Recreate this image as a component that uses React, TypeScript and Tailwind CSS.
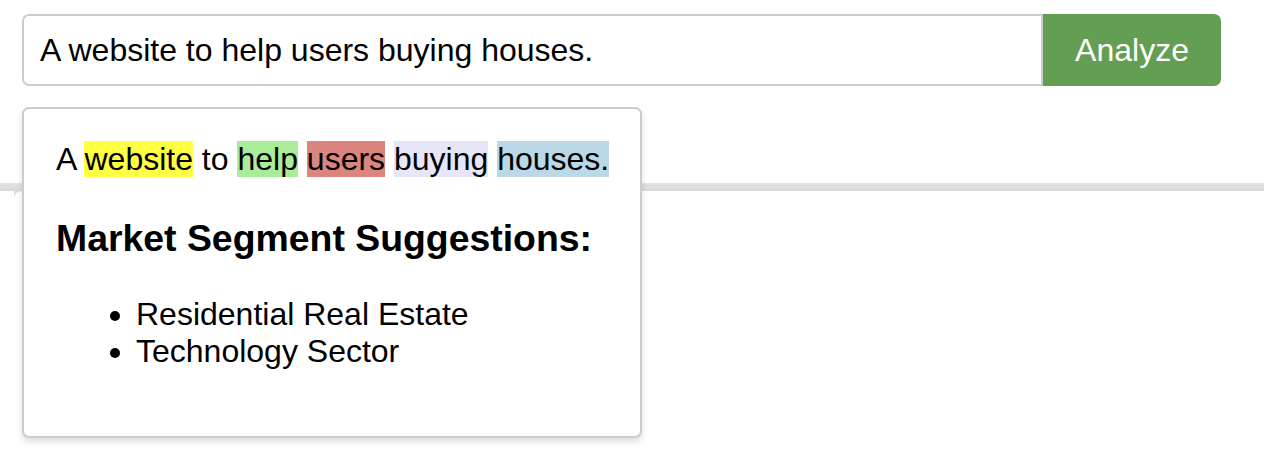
import React from "react";

export default function App() {
  const font = { fontFamily: '"Liberation Sans", Arial, Helvetica, sans-serif' };
  return (
    <div className="relative w-[1264px] h-[468px] bg-white overflow-hidden text-black" style={font}>
      <div className="pt-[14px] pl-[22px]">
        <div className="flex w-[1199px] h-[72px]">
          <div className="flex-1 flex items-center border-2 border-[#cccccc] rounded-l-[7px] pl-[16px] text-[32px] leading-[37px]">
            A website to help users buying houses.
          </div>
          <button className="w-[178px] h-[72px] bg-[#649e52] text-white text-[32px] leading-[37px] rounded-r-[7px] flex items-center justify-center">
            Analyze
          </button>
        </div>
      </div>

      <div className="mt-[97px] w-full">
        <div className="h-[8px] w-full bg-gradient-to-b from-[#e2e2e2] to-[#d9d9d9]" />
        <div className="flex">
          <div className="w-[14px]" />
          <div className="w-[8px] h-[8px] bg-[#dcdcdc]">
            <div className="w-full h-full bg-white rounded-tl-[8px]" />
          </div>
        </div>
      </div>

      <div className="absolute left-[22px] top-[107px] w-[620px] border-2 border-[#cccccc] rounded-[7px] bg-white pt-[32px] px-[32px] pb-[32px] shadow-[0_4px_6px_rgba(0,0,0,0.13)]">
        <div className="text-[32px] leading-[37px] whitespace-nowrap">
          A <span className="bg-[#ffff44]">website</span> to{" "}
          <span className="bg-[#aaed98]">help</span>{" "}
          <span className="bg-[#db857f]">users</span>{" "}
          <span className="bg-[#e7e6f9]">buying</span>{" "}
          <span className="bg-[#bad8e5]">houses.</span>
        </div>
        <h3 className="mt-[39px] text-[37.4px] leading-[43px] font-bold">Market Segment Suggestions:</h3>
        <ul className="mt-[36px] mb-[34px] list-disc pl-[80px] text-[32px] leading-[37px]">
          <li>Residential Real Estate</li>
          <li>Technology Sector</li>
        </ul>
      </div>
    </div>
  );
}
